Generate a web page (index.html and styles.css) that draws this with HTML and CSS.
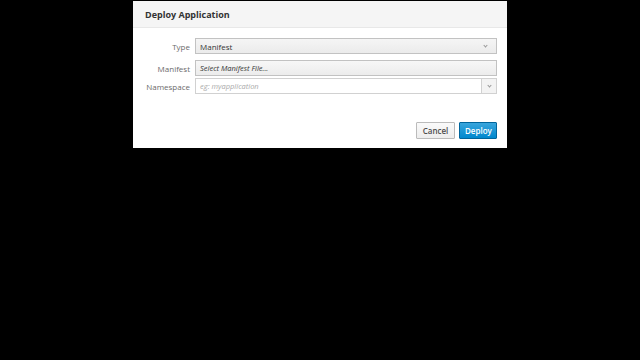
FILE: index.html
```html
<!DOCTYPE html>
<html lang="en">
  <head>
    <meta charset="UTF-8" />
    <title>Deploy Application</title>
    <link rel="stylesheet" href="styles.css">
  </head>
  <body>
    <div class="modal">
      <div class="modal-header">
        <h4>Deploy Application</h4>
      </div>
      <div class="modal-body">
        <div class="form-row row-type">
          <label>Type</label>
          <div class="select">
            <span>Manifest</span>
            <span class="caret"></span>
          </div>
        </div>
        <div class="form-row row-manifest">
          <label>Manifest</label>
          <div class="file-input">Select Manifest File...</div>
        </div>
        <div class="form-row">
          <label>Namespace</label>
          <div class="combo">
            <span class="placeholder">eg: myapplication</span>
            <span class="combo-button"><span class="caret"></span></span>
          </div>
        </div>
      </div>
      <div class="modal-footer">
        <button class="btn btn-default">Cancel</button>
        <button class="btn btn-primary">Deploy</button>
      </div>
    </div>
  </body>
</html>
```

FILE: styles.css
```css
body {
  margin: 0;
  background-color: #000;
  font-family: "Open Sans", "Liberation Sans", sans-serif;
  font-size: 8px;
  color: #363636;
  width: 640px;
  height: 360px;
  overflow: hidden;
}
.modal {
  width: 374px;
  margin: 1px 0 0 133px;
  background-color: #fff;
  height: 147px;
  display: flex;
  flex-direction: column;
}
.modal-header {
  height: 26px;
  background-color: #f5f5f5;
  border-bottom: 1px solid #e8e8e8;
  display: flex;
  align-items: center;
  padding-left: 12px;
}
.modal-header h4 {
  margin: 0;
  font-size: 9px;
  font-weight: 700;
  color: #333;
}
.modal-body {
  padding: 10px 10px 0 0;
  display: flex;
  flex-direction: column;
  gap: 2px;
}
.form-row {
  display: grid;
  grid-template-columns: 57px 1fr;
  column-gap: 5px;
  align-items: center;
  height: 16px;
}
.row-type {
  margin-bottom: 4px;
}
.form-row label {
  text-align: right;
  color: #6b6b6b;
}
.select {
  height: 16px;
  box-sizing: border-box;
  border: 1px solid #c2c2c2;
  background: linear-gradient(#f5f5f5, #ebebeb);
  display: flex;
  align-items: center;
  justify-content: space-between;
  padding: 0 9px 0 4px;
  color: #363636;
}
.caret {
  width: 2px;
  height: 2px;
  border-right: 1px solid #999;
  border-bottom: 1px solid #999;
  transform: rotate(45deg);
  margin-top: -1px;
}
.file-input {
  height: 16px;
  box-sizing: border-box;
  border: 1px solid #c2c2c2;
  background: linear-gradient(#f7f7f7, #ececec);
  display: flex;
  align-items: center;
  padding-left: 4px;
  font-style: italic;
  font-size: 7.5px;
  color: #363636;
}
.combo {
  height: 16px;
  box-sizing: border-box;
  border: 1px solid #d1d1d1;
  display: flex;
  align-items: center;
  justify-content: space-between;
  padding-left: 4px;
}
.placeholder {
  font-style: italic;
  color: #aaa;
  font-size: 7.5px;
}
.combo-button {
  width: 14px;
  height: 100%;
  border-left: 1px solid #d1d1d1;
  background-color: #f3f3f3;
  display: flex;
  align-items: center;
  justify-content: center;
}
.modal-footer {
  margin-top: auto;
  display: flex;
  justify-content: flex-end;
  gap: 4px;
  padding: 0 10px 9px 0;
}
.btn {
  height: 17px;
  box-sizing: border-box;
  font-family: "Open Sans", "Liberation Sans", sans-serif;
  font-size: 8px;
  font-weight: 600;
  padding: 0 5px;
  border-radius: 1px;
  cursor: pointer;
}
.btn-default {
  width: 39px;
  border: 1px solid #bbb;
  background: linear-gradient(#fafafa, #ededed);
  color: #4d4d4d;
}
.btn-primary {
  width: 38px;
  border: 1px solid #00659c;
  background: linear-gradient(#39a5dc, #0088ce);
  color: #fff;
}
```
